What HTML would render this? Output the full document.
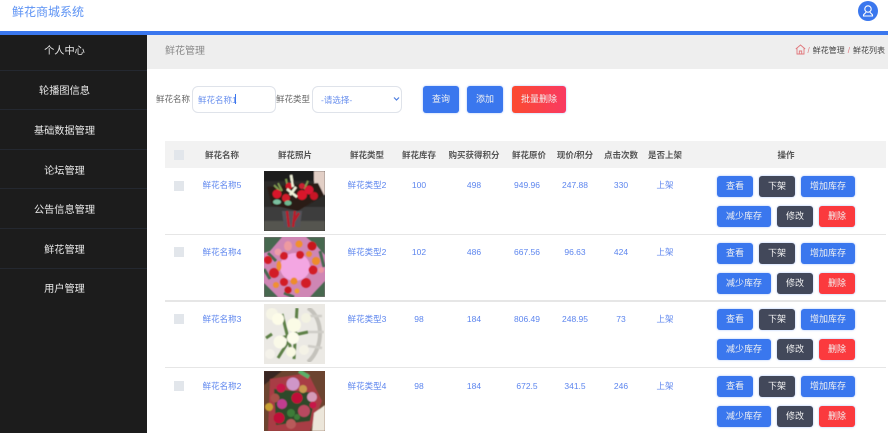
<!DOCTYPE html>
<html lang="zh"><head><meta charset="utf-8"><title>鲜花商城系统</title>
<style>
*{box-sizing:border-box}
html,body{margin:0;padding:0;width:888px;height:433px;overflow:hidden;background:#fff;font-family:"Liberation Sans","Noto Sans CJK SC",sans-serif}
.a{position:absolute;white-space:nowrap}
#sb{left:0;top:35px;width:147px;height:398px;background:#1c1c1c}
.m{position:absolute;left:0;width:129px;text-align:center;color:#e8e8e8;font-size:10.2px;line-height:14px}
.ml{position:absolute;left:0;width:147px;height:1px;background:#242830}
.h{top:149px;font-size:8.5px;line-height:12px;color:#555;font-weight:bold;transform:translateX(-50%)}
.t{font-size:8.5px;line-height:12px;color:#5c85ee;transform:translateX(-50%)}
.l{font-size:8.5px;line-height:13px}
.b{position:absolute;height:21px;border-radius:3px;color:#f2f2f2;font-size:9px;line-height:21px;text-align:center;box-shadow:0 0 2px #a9c4fa}
.bl{background:#3a77ee}.dk{background:#42485a}.rd{background:#fb3a3e}
.w1{width:36px}.w2{width:54px}
.s{top:86px;height:27px;line-height:27px}
.cb{position:absolute;left:174px;width:10px;height:10px;background:#e2e6eb}
.d{position:absolute;left:165px;width:721px;background:#e6e6e6}
svg.p{position:absolute;left:264px;width:61px;height:60px}
</style></head><body>

<div class="a" style="left:12px;top:4px;font-size:12px;line-height:17px;color:#5c92f4">鲜花商城系统</div>
<div class="a" style="left:858px;top:1px;width:20px;height:20px;border-radius:50%;background:#3a77ee">
<svg width="20" height="20" viewBox="0 0 20 20" fill="none" stroke="#fff" stroke-width="1.1"><circle cx="10" cy="8" r="3.2"/><path d="M8 11 C7.500 12.500 6 12.800 5.500 14 L5.500 15 L14.500 15 L14.500 14 C14 12.800 12.500 12.500 12 11"/></svg></div>
<div class="a" style="left:0;top:31px;width:888px;height:4px;background:#3a77ee"></div>

<div class="a" id="sb">
<div class="m" style="top:10px">个人中心</div><div class="ml" style="top:35px"></div>
<div class="m" style="top:50px">轮播图信息</div><div class="ml" style="top:74px"></div>
<div class="m" style="top:90px">基础数据管理</div><div class="ml" style="top:114px"></div>
<div class="m" style="top:130px">论坛管理</div><div class="ml" style="top:153px"></div>
<div class="m" style="top:169px">公告信息管理</div><div class="ml" style="top:193px"></div>
<div class="m" style="top:209px">鲜花管理</div><div class="ml" style="top:233px"></div>
<div class="m" style="top:248px">用户管理</div>
</div>

<div class="a" style="left:147px;top:35px;width:741px;height:34px;background:#eee"></div>
<div class="a" style="left:165px;top:44px;font-size:10px;line-height:15px;color:#8a8a8a">鲜花管理</div>
<svg class="a" style="left:795px;top:44px" width="11" height="11" viewBox="0 0 11 11" fill="none" stroke="#e0777c" stroke-width=".9"><path d="M.8 5 L5.500 1 L10.200 5 M2 4.500 V10 H9 V4.500 M4.300 10 V7 H6.700 V10"/></svg>
<div class="a" style="left:807.500px;top:45px;font-size:8px;line-height:12px;color:#444"><span style="color:#e0777c">/</span><span style="margin-left:3px">鲜花管理</span><span style="color:#e0777c;margin:0 3px">/</span>鲜花列表</div>

<div class="a l" style="left:156px;top:93px;color:#666">鲜花名称</div>
<div class="a" style="left:192px;top:86px;width:84px;height:27px;border:1px solid #dfe3ea;border-radius:6px;background:#fff"></div>
<div class="a l" style="left:198px;top:94px;color:#6a90ee">鲜花名称1<span style="display:inline-block;width:1px;height:10px;background:#3a77ee;vertical-align:-1px;margin-left:-2px"></span></div>
<div class="a l" style="left:276px;top:93px;color:#666">鲜花类型</div>
<div class="a" style="left:312px;top:86px;width:90px;height:27px;border:1px solid #dfe3ea;border-radius:6px;background:#fff"></div>
<div class="a l" style="left:321px;top:94px;color:#6a90ee">-请选择-</div>
<svg class="a" style="left:393px;top:96px" width="7" height="6" viewBox="0 0 7 6" fill="none" stroke="#4f7fe0" stroke-width="1.200"><path d="M1 1.500 L3.500 4 L6 1.500"/></svg>
<div class="b bl s" style="left:423px;width:36px">查询</div>
<div class="b bl s" style="left:467px;width:36px">添加</div>
<div class="b s" style="left:512px;width:54px;background:linear-gradient(90deg,#fb4a30,#f93a62)">批量删除</div>

<div class="a" style="left:165px;top:141px;width:721px;height:27px;background:#f2f2f2"></div>
<div class="cb" style="top:150px"></div>
<div class="a h" style="left:222px">鲜花名称</div>
<div class="a h" style="left:295px">鲜花照片</div>
<div class="a h" style="left:367px">鲜花类型</div>
<div class="a h" style="left:419px">鲜花库存</div>
<div class="a h" style="left:474px">购买获得积分</div>
<div class="a h" style="left:529px">鲜花原价</div>
<div class="a h" style="left:575px">现价/积分</div>
<div class="a h" style="left:621px">点击次数</div>
<div class="a h" style="left:665px">是否上架</div>
<div class="a h" style="left:786px">操作</div>

<div class="d" style="top:234px;height:1px"></div>
<div class="d" style="top:300px;height:2px"></div>
<div class="d" style="top:367px;height:1px"></div>

<svg width="0" height="0" style="position:absolute"><filter id="bl" x="0" y="0" width="100%" height="100%"><feGaussianBlur stdDeviation=".6"/></filter></svg>

<div class="cb" style="top:181px"></div>
<div class="a t" style="left:222px;top:179px">鲜花名称5</div>
<svg class="p" style="top:171px" viewBox="0 0 61 60"><rect width="61" height="60" fill="#2c2b29"/><g filter="url(#bl)"><rect x="0" y="0" width="51" height="10" fill="#1c1c1c"/><rect x="50" y="0" width="11" height="24" fill="#e2cfc6"/><rect y="36" width="61" height="24" fill="#3e3e3c"/><rect y="50" width="61" height="10" fill="#55554f"/><path d="M3 16 L54 12 L60 24 L34 40 L8 34Z" fill="#2a1c18"/><path d="M14 12 L18 20 M22 8 L24 18 M44 10 L40 18 M10 14 L16 20" stroke="#7f9a50" stroke-width="2"/><circle cx="13" cy="23" r="4.500" fill="#d8182c"/><circle cx="25" cy="15" r="3.500" fill="#d01428"/><circle cx="22" cy="27" r="4" fill="#d01a2c"/><circle cx="38" cy="24" r="5" fill="#d8182c"/><circle cx="45" cy="19" r="4.500" fill="#d81830"/><circle cx="50" cy="25" r="4" fill="#c81428"/><circle cx="38" cy="15" r="3" fill="#c82030"/><path d="M23 18 L33 26 M32 16 L26 24 M27 4 L29 16" stroke="#eef0d8" stroke-width="2.500"/><ellipse cx="13" cy="31" rx="4" ry="2.500" fill="#7cc0a0"/><ellipse cx="24" cy="32" rx="3.500" ry="2.500" fill="#70b890"/><path d="M18 40 H38 L36 56 H20Z" fill="#53535a"/><path d="M23 40 L25 56 M31 40 L29 56 M35 42 L30 50" stroke="#b81c2c" stroke-width="2.500"/></g></svg>
<div class="a t" style="left:367px;top:179px">鲜花类型2</div>
<div class="a t" style="left:419px;top:179px">100</div>
<div class="a t" style="left:474px;top:179px">498</div>
<div class="a t" style="left:527px;top:179px">949.96</div>
<div class="a t" style="left:575px;top:179px">247.88</div>
<div class="a t" style="left:621px;top:179px">330</div>
<div class="a t" style="left:665px;top:179px">上架</div>
<div class="b bl w1" style="left:717px;top:176px">查看</div><div class="b dk w1" style="left:759px;top:176px">下架</div><div class="b bl w2" style="left:801px;top:176px">增加库存</div>
<div class="b bl w2" style="left:717px;top:206px">减少库存</div><div class="b dk w1" style="left:777px;top:206px">修改</div><div class="b rd w1" style="left:819px;top:206px">删除</div>

<div class="cb" style="top:247px"></div>
<div class="a t" style="left:222px;top:246px">鲜花名称4</div>
<svg class="p" style="top:237px" viewBox="0 0 61 60"><rect width="61" height="60" fill="#cf86b4"/><g filter="url(#bl)"><path d="M0 0 H18 L6 14 L0 16Z M42 0 H61 V18 L52 8Z M0 46 L14 60 H0Z M61 44 V60 H46Z" fill="#47674f"/><path d="M4 16 L12 24 M0 32 L6 42 M56 14 L60 30 M20 56 L30 60" stroke="#47674f" stroke-width="3"/><ellipse cx="31" cy="30" rx="15" ry="14" fill="#f3a6e2"/><ellipse cx="24" cy="9" rx="4" ry="5" fill="#ee9aa0"/><circle cx="35" cy="7" r="3.500" fill="#f2902c"/><circle cx="48" cy="9" r="4.500" fill="#c8141c"/><circle cx="14" cy="15" r="3.500" fill="#ec9ca8"/><circle cx="20" cy="19" r="4" fill="#d21c28"/><circle cx="36" cy="18" r="4" fill="#d21c28"/><circle cx="45" cy="17" r="3" fill="#ee8c2c"/><circle cx="4" cy="23" r="4" fill="#d21c28"/><ellipse cx="15" cy="29" rx="2.500" ry="5" fill="#f09030"/><circle cx="10" cy="36" r="5" fill="#d21c28"/><circle cx="52" cy="24" r="4" fill="#ee8c2c"/><circle cx="49" cy="33" r="4.500" fill="#d21c28"/><circle cx="57" cy="33" r="3" fill="#ec94a0"/><circle cx="20" cy="45" r="4" fill="#d21c28"/><circle cx="30" cy="44" r="3.500" fill="#ee8c2c"/><circle cx="42" cy="46" r="5" fill="#d21c28"/><circle cx="12" cy="48" r="3" fill="#f09030"/><circle cx="24" cy="53" r="3.500" fill="#c8141c"/><circle cx="33" cy="54" r="2.500" fill="#f0a030"/></g></svg>
<div class="a t" style="left:367px;top:246px">鲜花类型2</div>
<div class="a t" style="left:419px;top:246px">102</div>
<div class="a t" style="left:474px;top:246px">486</div>
<div class="a t" style="left:527px;top:246px">667.56</div>
<div class="a t" style="left:575px;top:246px">96.63</div>
<div class="a t" style="left:621px;top:246px">424</div>
<div class="a t" style="left:665px;top:246px">上架</div>
<div class="b bl w1" style="left:717px;top:243px">查看</div><div class="b dk w1" style="left:759px;top:243px">下架</div><div class="b bl w2" style="left:801px;top:243px">增加库存</div>
<div class="b bl w2" style="left:717px;top:273px">减少库存</div><div class="b dk w1" style="left:777px;top:273px">修改</div><div class="b rd w1" style="left:819px;top:273px">删除</div>

<div class="cb" style="top:314px"></div>
<div class="a t" style="left:222px;top:313px">鲜花名称3</div>
<svg class="p" style="top:304px" viewBox="0 0 61 60"><rect width="61" height="60" fill="#ebe9e4"/><g filter="url(#bl)"><path d="M44 4 C60 14 60 44 44 58" stroke="#c4c2bc" stroke-width="4" fill="none"/><path d="M40 12 L58 12 M42 28 L60 28 M44 42 L58 44" stroke="#cfcdc7" stroke-width="2.500"/><path d="M18 10 L28 50 M33 4 L30 55 M44 28 L16 34 M2 34 L8 30 M14 54 L24 38" stroke="#5d8046" stroke-width="3"/><circle cx="8" cy="10" r="6" fill="#f6f5e6"/><circle cx="14" cy="15" r="6" fill="#fdfce8"/><circle cx="30" cy="21" r="7" fill="#fbfbe6"/><circle cx="42" cy="14" r="5" fill="#f3f2e2"/><circle cx="16" cy="38" r="6.500" fill="#faf9e8"/><circle cx="29" cy="34" r="6" fill="#fdfcec"/><circle cx="27" cy="48" r="5" fill="#f8f8e2"/><circle cx="40" cy="46" r="5" fill="#f4f2e6"/><circle cx="6" cy="50" r="5" fill="#f4f2ea"/></g></svg>
<div class="a t" style="left:367px;top:313px">鲜花类型3</div>
<div class="a t" style="left:419px;top:313px">98</div>
<div class="a t" style="left:474px;top:313px">184</div>
<div class="a t" style="left:527px;top:313px">806.49</div>
<div class="a t" style="left:575px;top:313px">248.95</div>
<div class="a t" style="left:621px;top:313px">73</div>
<div class="a t" style="left:665px;top:313px">上架</div>
<div class="b bl w1" style="left:717px;top:309px">查看</div><div class="b dk w1" style="left:759px;top:309px">下架</div><div class="b bl w2" style="left:801px;top:309px">增加库存</div>
<div class="b bl w2" style="left:717px;top:339px">减少库存</div><div class="b dk w1" style="left:777px;top:339px">修改</div><div class="b rd w1" style="left:819px;top:339px">删除</div>

<div class="cb" style="top:381px"></div>
<div class="a t" style="left:222px;top:380px">鲜花名称2</div>
<svg class="p" style="top:371px" viewBox="0 0 61 60"><rect width="61" height="60" fill="#6c4430"/><g filter="url(#bl)"><path d="M0 0 H18 L0 14Z" fill="#382820"/><path d="M6 8 L44 2 L58 30 L46 60 H4 Z" fill="#a83c44"/><path d="M50 42 L61 34 V60 H48Z" fill="#ece6da"/><path d="M10 18 L52 22 L46 50 L12 54Z" fill="#2f4a2c"/><circle cx="29" cy="13" r="6.500" fill="#cf96c8"/><circle cx="17" cy="17" r="4.500" fill="#c81848"/><circle cx="39" cy="18" r="4" fill="#c89850"/><circle cx="48" cy="26" r="5" fill="#d49ab8"/><circle cx="33" cy="27" r="5.500" fill="#c01038"/><circle cx="11" cy="27" r="4.500" fill="#a85048"/><circle cx="18" cy="33" r="5" fill="#c03c90"/><circle cx="5" cy="36" r="4" fill="#c8a030"/><circle cx="40" cy="40" r="6" fill="#b84860"/><circle cx="49" cy="34" r="3.500" fill="#c81848"/><circle cx="15" cy="47" r="5.500" fill="#c01038"/><circle cx="27" cy="42" r="4" fill="#3c7c38"/><circle cx="33" cy="46" r="3" fill="#3c7c38"/><circle cx="27" cy="53" r="5" fill="#b85a5a"/><path d="M35 0 L45 6" stroke="#5ab06a" stroke-width="4"/></g></svg>
<div class="a t" style="left:367px;top:380px">鲜花类型4</div>
<div class="a t" style="left:419px;top:380px">98</div>
<div class="a t" style="left:474px;top:380px">184</div>
<div class="a t" style="left:527px;top:380px">672.5</div>
<div class="a t" style="left:575px;top:380px">341.5</div>
<div class="a t" style="left:621px;top:380px">246</div>
<div class="a t" style="left:665px;top:380px">上架</div>
<div class="b bl w1" style="left:717px;top:376px">查看</div><div class="b dk w1" style="left:759px;top:376px">下架</div><div class="b bl w2" style="left:801px;top:376px">增加库存</div>
<div class="b bl w2" style="left:717px;top:406px">减少库存</div><div class="b dk w1" style="left:777px;top:406px">修改</div><div class="b rd w1" style="left:819px;top:406px">删除</div>

</body></html>
